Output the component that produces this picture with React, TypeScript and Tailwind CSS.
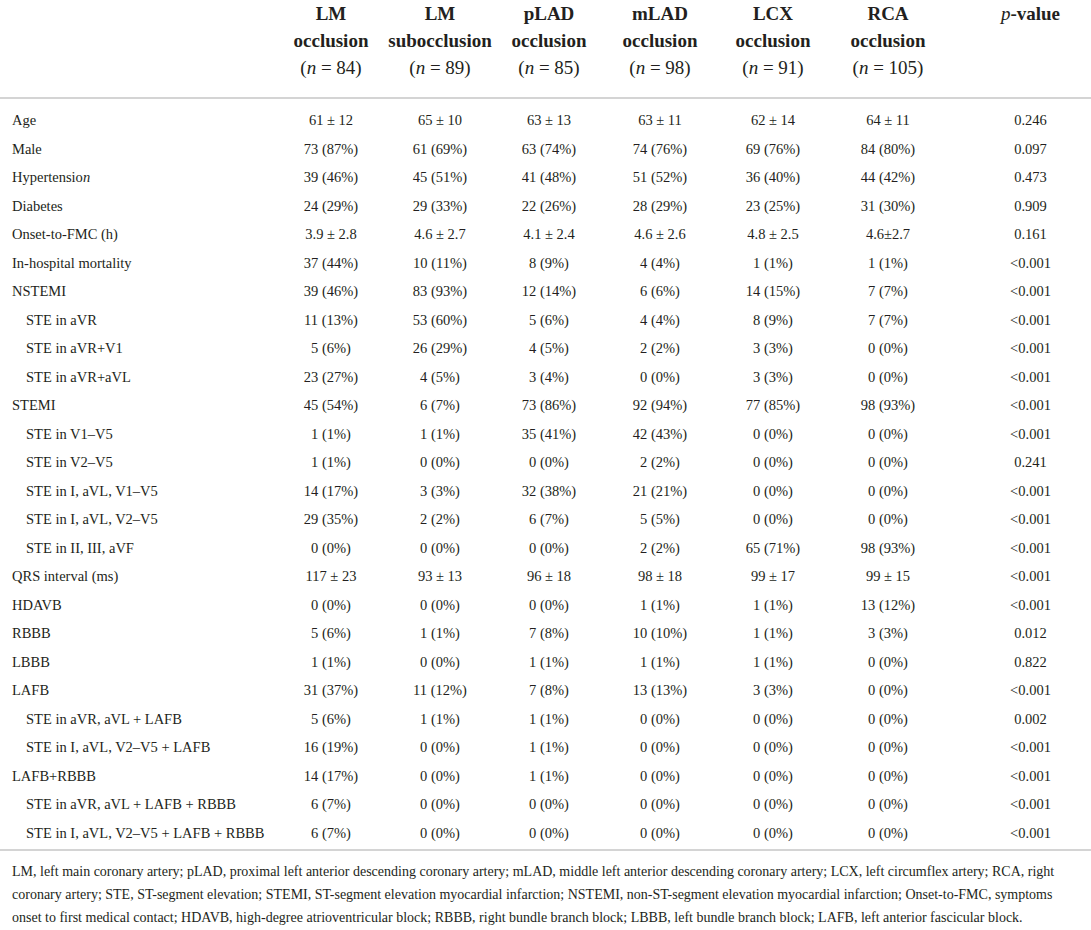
const cols = "grid grid-cols-[276px_110px_108px_110px_112px_114px_116px_1fr]";

type Row = { label: string; sub?: boolean; vals: string[] };

const rows: Row[] = [
  { label: "Age", vals: ["61 ± 12", "65 ± 10", "63 ± 13", "63 ± 11", "62 ± 14", "64 ± 11", "0.246"] },
  { label: "Male", vals: ["73 (87%)", "61 (69%)", "63 (74%)", "74 (76%)", "69 (76%)", "84 (80%)", "0.097"] },
  { label: "Hypertension", vals: ["39 (46%)", "45 (51%)", "41 (48%)", "51 (52%)", "36 (40%)", "44 (42%)", "0.473"] },
  { label: "Diabetes", vals: ["24 (29%)", "29 (33%)", "22 (26%)", "28 (29%)", "23 (25%)", "31 (30%)", "0.909"] },
  { label: "Onset-to-FMC (h)", vals: ["3.9 ± 2.8", "4.6 ± 2.7", "4.1 ± 2.4", "4.6 ± 2.6", "4.8 ± 2.5", "4.6±2.7", "0.161"] },
  { label: "In-hospital mortality", vals: ["37 (44%)", "10 (11%)", "8 (9%)", "4 (4%)", "1 (1%)", "1 (1%)", "<0.001"] },
  { label: "NSTEMI", vals: ["39 (46%)", "83 (93%)", "12 (14%)", "6 (6%)", "14 (15%)", "7 (7%)", "<0.001"] },
  { label: "STE in aVR", sub: true, vals: ["11 (13%)", "53 (60%)", "5 (6%)", "4 (4%)", "8 (9%)", "7 (7%)", "<0.001"] },
  { label: "STE in aVR+V1", sub: true, vals: ["5 (6%)", "26 (29%)", "4 (5%)", "2 (2%)", "3 (3%)", "0 (0%)", "<0.001"] },
  { label: "STE in aVR+aVL", sub: true, vals: ["23 (27%)", "4 (5%)", "3 (4%)", "0 (0%)", "3 (3%)", "0 (0%)", "<0.001"] },
  { label: "STEMI", vals: ["45 (54%)", "6 (7%)", "73 (86%)", "92 (94%)", "77 (85%)", "98 (93%)", "<0.001"] },
  { label: "STE in V1–V5", sub: true, vals: ["1 (1%)", "1 (1%)", "35 (41%)", "42 (43%)", "0 (0%)", "0 (0%)", "<0.001"] },
  { label: "STE in V2–V5", sub: true, vals: ["1 (1%)", "0 (0%)", "0 (0%)", "2 (2%)", "0 (0%)", "0 (0%)", "0.241"] },
  { label: "STE in I, aVL, V1–V5", sub: true, vals: ["14 (17%)", "3 (3%)", "32 (38%)", "21 (21%)", "0 (0%)", "0 (0%)", "<0.001"] },
  { label: "STE in I, aVL, V2–V5", sub: true, vals: ["29 (35%)", "2 (2%)", "6 (7%)", "5 (5%)", "0 (0%)", "0 (0%)", "<0.001"] },
  { label: "STE in II, III, aVF", sub: true, vals: ["0 (0%)", "0 (0%)", "0 (0%)", "2 (2%)", "65 (71%)", "98 (93%)", "<0.001"] },
  { label: "QRS interval (ms)", vals: ["117 ± 23", "93 ± 13", "96 ± 18", "98 ± 18", "99 ± 17", "99 ± 15", "<0.001"] },
  { label: "HDAVB", vals: ["0 (0%)", "0 (0%)", "0 (0%)", "1 (1%)", "1 (1%)", "13 (12%)", "<0.001"] },
  { label: "RBBB", vals: ["5 (6%)", "1 (1%)", "7 (8%)", "10 (10%)", "1 (1%)", "3 (3%)", "0.012"] },
  { label: "LBBB", vals: ["1 (1%)", "0 (0%)", "1 (1%)", "1 (1%)", "1 (1%)", "0 (0%)", "0.822"] },
  { label: "LAFB", vals: ["31 (37%)", "11 (12%)", "7 (8%)", "13 (13%)", "3 (3%)", "0 (0%)", "<0.001"] },
  { label: "STE in aVR, aVL + LAFB", sub: true, vals: ["5 (6%)", "1 (1%)", "1 (1%)", "0 (0%)", "0 (0%)", "0 (0%)", "0.002"] },
  { label: "STE in I, aVL, V2–V5 + LAFB", sub: true, vals: ["16 (19%)", "0 (0%)", "1 (1%)", "0 (0%)", "0 (0%)", "0 (0%)", "<0.001"] },
  { label: "LAFB+RBBB", vals: ["14 (17%)", "0 (0%)", "1 (1%)", "0 (0%)", "0 (0%)", "0 (0%)", "<0.001"] },
  { label: "STE in aVR, aVL + LAFB + RBBB", sub: true, vals: ["6 (7%)", "0 (0%)", "0 (0%)", "0 (0%)", "0 (0%)", "0 (0%)", "<0.001"] },
  { label: "STE in I, aVL, V2–V5 + LAFB + RBBB", sub: true, vals: ["6 (7%)", "0 (0%)", "0 (0%)", "0 (0%)", "0 (0%)", "0 (0%)", "<0.001"] },
];

const groups = [
  { top: "LM", n: "84" },
  { top: "LM", mid: "subocclusion", n: "89" },
  { top: "pLAD", n: "85" },
  { top: "mLAD", n: "98" },
  { top: "LCX", n: "91" },
  { top: "RCA", n: "105" },
];

function Label({ text }: { text: string }) {
  // "Hypertension" ends in an italic n in the source
  if (text === "Hypertension") {
    return (
      <>
        Hypertensio<i>n</i>
      </>
    );
  }
  return <>{text}</>;
}

export default function App() {
  return (
    <div className="w-[1091px] bg-white text-[#231f20] font-['Liberation_Serif',serif]">
      <div className={`${cols} h-[97px] text-[19px] leading-[27px]`}>
        <div />
        {groups.map((g, i) => (
          <div key={i} className="flex flex-col items-center whitespace-nowrap">
            <span className="font-bold">{g.top}</span>
            <span className="font-bold">{g.mid ?? "occlusion"}</span>
            <span>
              (<i>n</i> = {g.n})
            </span>
          </div>
        ))}
        <div className="pl-[24px] text-center">
          <i>p</i>
          <span className="font-bold">-value</span>
        </div>
      </div>
      <div className="h-[2px] bg-[#d4d4d4]" />
      <div className="pt-[8px] text-[14.5px]">
        {rows.map((r, i) => (
          <div key={i} className={`${cols} h-[28.5px] items-center`}>
            <div className={r.sub ? "pl-[26px]" : "pl-[12px]"}>
              <Label text={r.label} />
            </div>
            {r.vals.map((v, j) => (
              <div key={j} className={`text-center whitespace-nowrap ${j === 6 ? "pl-[24px]" : ""}`}>
                {v}
              </div>
            ))}
          </div>
        ))}
      </div>
      <div className="mt-[1px] h-[2px] bg-[#d4d4d4]" />
      <p className="px-[12px] pt-[9px] text-[14px] leading-[23px]">
        LM, left main coronary artery; pLAD, proximal left anterior descending coronary artery; mLAD, middle left anterior
        descending coronary artery; LCX, left circumflex artery; RCA, right coronary artery; STE, ST-segment elevation;
        STEMI, ST-segment elevation myocardial infarction; NSTEMI, non-ST-segment elevation myocardial infarction;
        Onset-to-FMC, symptoms onset to first medical contact; HDAVB, high-degree atrioventricular block; RBBB, right
        bundle branch block; LBBB, left bundle branch block; LAFB, left anterior fascicular block.
      </p>
    </div>
  );
}
